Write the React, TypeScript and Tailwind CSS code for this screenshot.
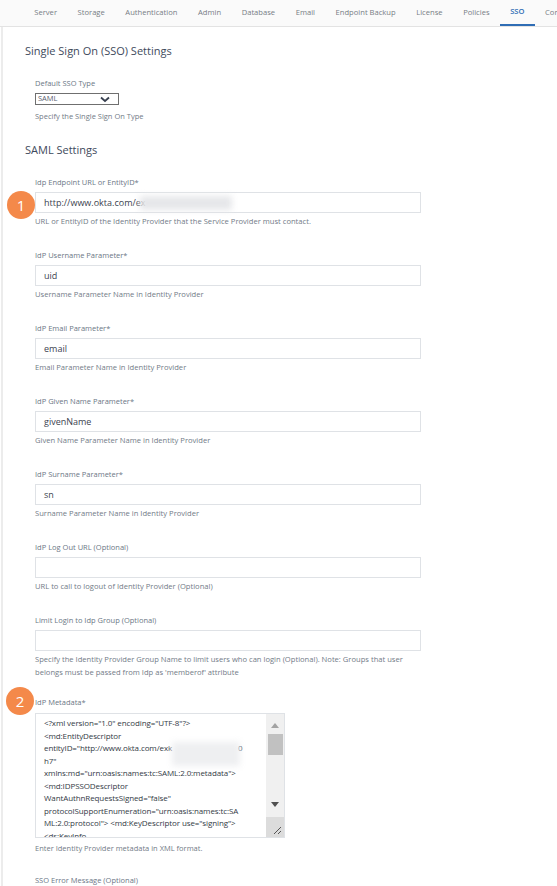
import React from "react";

const tabs = [
  "Server",
  "Storage",
  "Authentication",
  "Admin",
  "Database",
  "Email",
  "Endpoint Backup",
  "License",
  "Policies",
  "SSO",
  "Control",
];

interface FieldProps {
  label: string;
  value?: string;
  help: React.ReactNode;
  badge?: string;
  blur?: boolean;
}

function Badge({ n, top }: { n: string; top: string }) {
  return (
    <div
      className={`absolute left-[-29px] ${top} w-[28px] h-[28px] rounded-full bg-[#f4894a] text-white text-[15px] flex items-center justify-center`}
    >
      {n}
    </div>
  );
}

function Field({ label, value, help, badge, blur }: FieldProps) {
  return (
    <div className="h-[73px]">
      <div className="text-[7.5px] text-[#6c7786] leading-[10px]">{label}</div>
      <div className="relative mt-[5px] w-[386px] h-[21px] border border-[#dfe2e6] bg-white flex items-center px-[8px] text-[9px] text-[#3c4350]">
        {badge && <Badge n={badge} top="top-[-2px]" />}
        {value}
        {blur && (
          <div className="absolute left-[104px] top-[3px] w-[92px] h-[14px] bg-[#e6e7ea] blur-[3px]" />
        )}
      </div>
      <div className="mt-[2px] text-[7.6px] text-[#727b87] leading-[13px]">{help}</div>
    </div>
  );
}

const xmlLines: React.ReactNode[] = [
  '<?xml version="1.0" encoding="UTF-8"?>',
  "<md:EntityDescriptor",
  <>
    entityID="http://www.okta.com/exk
    <span className="inline-block w-[66px]" />0
  </>,
  'h7"',
  'xmlns:md="urn:oasis:names:tc:SAML:2.0:metadata">',
  "<md:IDPSSODescriptor",
  'WantAuthnRequestsSigned="false"',
  'protocolSupportEnumeration="urn:oasis:names:tc:SA',
  'ML:2.0:protocol"> <md:KeyDescriptor use="signing">',
  "<ds:KeyInfo",
];

export default function App() {
  return (
    <div
      className="w-[557px] h-[886px] overflow-hidden bg-white"
      style={{ fontFamily: '"Open Sans", "Noto Sans", sans-serif' }}
    >
      {/* Tabs */}
      <div className="h-[27px] bg-[#fafafa] border-b border-[#e3e3e3] flex items-stretch pl-[24px] whitespace-nowrap overflow-hidden">
        {tabs.map((t) => (
          <div
            key={t}
            className={
              t === "SSO"
                ? "shrink-0 px-[10.3px] flex items-center text-[7.6px] font-semibold text-[#2f6db5] border-b-2 border-[#2f6db5]"
                : "shrink-0 px-[10.3px] flex items-center text-[7.6px] text-[#777d85]"
            }
          >
            {t}
          </div>
        ))}
      </div>

      <div className="flex">
        <div className="w-[2px] bg-[#ececec] ml-[1px] h-[860px]" />
        <div className="pl-[22px] pt-[15px]">
          <h1 className="text-[11px] text-[#3e4a5c] leading-[18px]">
            Single Sign On (SSO) Settings
          </h1>

          <div className="pl-[10px] mt-[18px]">
            <div className="text-[7.5px] text-[#6c7786] leading-[10px]">Default SSO Type</div>
            <div className="mt-[5px] w-[84px] h-[12px] border border-[#6f6f6f] flex items-center justify-between px-[2px] text-[7.5px] text-[#5a6270]">
              <span>SAML</span>
              <svg width="10" height="7" viewBox="0 0 10 7" className="mr-[6px]">
                <path d="M1 1.5 L5 5 L9 1.5" stroke="#394150" strokeWidth="1.8" fill="none" />
              </svg>
            </div>
            <div className="mt-[6px] text-[7.5px] text-[#727b87] leading-[10px]">
              Specify the Single Sign On Type
            </div>
          </div>

          <h2 className="mt-[21px] text-[11px] text-[#3e4a5c] leading-[16px]">SAML Settings</h2>

          <div className="pl-[10px] mt-[19px]">
            <Field
              label="Idp Endpoint URL or EntityID*"
              value="http://www.okta.com/ex"
              blur
              badge="1"
              help="URL or EntityID of the Identity Provider that the Service Provider must contact."
            />
            <Field
              label="IdP Username Parameter*"
              value="uid"
              help="Username Parameter Name in Identity Provider"
            />
            <Field
              label="IdP Email Parameter*"
              value="email"
              help="Email Parameter Name in Identity Provider"
            />
            <Field
              label="IdP Given Name Parameter*"
              value="givenName"
              help="Given Name Parameter Name in Identity Provider"
            />
            <Field
              label="IdP Surname Parameter*"
              value="sn"
              help="Surname Parameter Name in Identity Provider"
            />
            <Field
              label="IdP Log Out URL (Optional)"
              help="URL to call to logout of Identity Provider (Optional)"
            />
            <Field
              label="Limit Login to Idp Group (Optional)"
              help={
                <>
                  Specify the Identity Provider Group Name to limit users who can login (Optional). Note: Groups that user
                  <br />
                  belongs must be passed from Idp as 'memberof' attribute
                </>
              }
            />

            {/* Metadata */}
            <div className="mt-[9px] relative">
              <Badge n="2" top="top-[-10px]" />
              <div className="text-[7.5px] text-[#6c7786] leading-[10px]">IdP Metadata*</div>
              <div className="mt-[6px] w-[250px] h-[125px] border border-[#dfe2e6] flex overflow-hidden">
                <div className="flex-1 pl-[8px] pt-[3px] overflow-hidden relative">
                  {xmlLines.map((l, i) => (
                    <div
                      key={i}
                      className="text-[8px] tracking-[-0.1px] leading-[12.5px] text-[#333a45] whitespace-pre"
                    >
                      {l}
                    </div>
                  ))}
                  <div className="absolute left-[136px] top-[28px] w-[68px] h-[24px] bg-[#eeeff1] blur-[3px]" />
                </div>
                <div className="w-[18px] bg-[#f0f0f0] flex flex-col items-center">
                  <svg width="8" height="5" viewBox="0 0 8 5" className="mt-[9px]">
                    <path d="M0 5 L4 0 L8 5 Z" fill="#a3a3a3" />
                  </svg>
                  <div className="mt-[6px] w-[15px] h-[21px] bg-[#c1c1c1]" />
                  <svg width="8" height="5" viewBox="0 0 8 5" className="mt-[47px]">
                    <path d="M0 0 L4 5 L8 0 Z" fill="#505050" />
                  </svg>
                  <div className="mt-[auto] w-full h-[20px] bg-[#dcdcdc] flex items-end justify-end p-[2px]">
                    <svg width="9" height="9" viewBox="0 0 9 9">
                      <path d="M1 8 L8 1 M5 8 L8 5" stroke="#555" strokeWidth="1" />
                    </svg>
                  </div>
                </div>
              </div>
              <div className="mt-[5px] text-[7.5px] text-[#727b87] leading-[10px]">
                Enter Identity Provider metadata in XML format.
              </div>
              <div className="mt-[22px] text-[7.5px] text-[#6c7786] leading-[10px]">
                SSO Error Message (Optional)
              </div>
            </div>
          </div>
        </div>
      </div>
    </div>
  );
}
